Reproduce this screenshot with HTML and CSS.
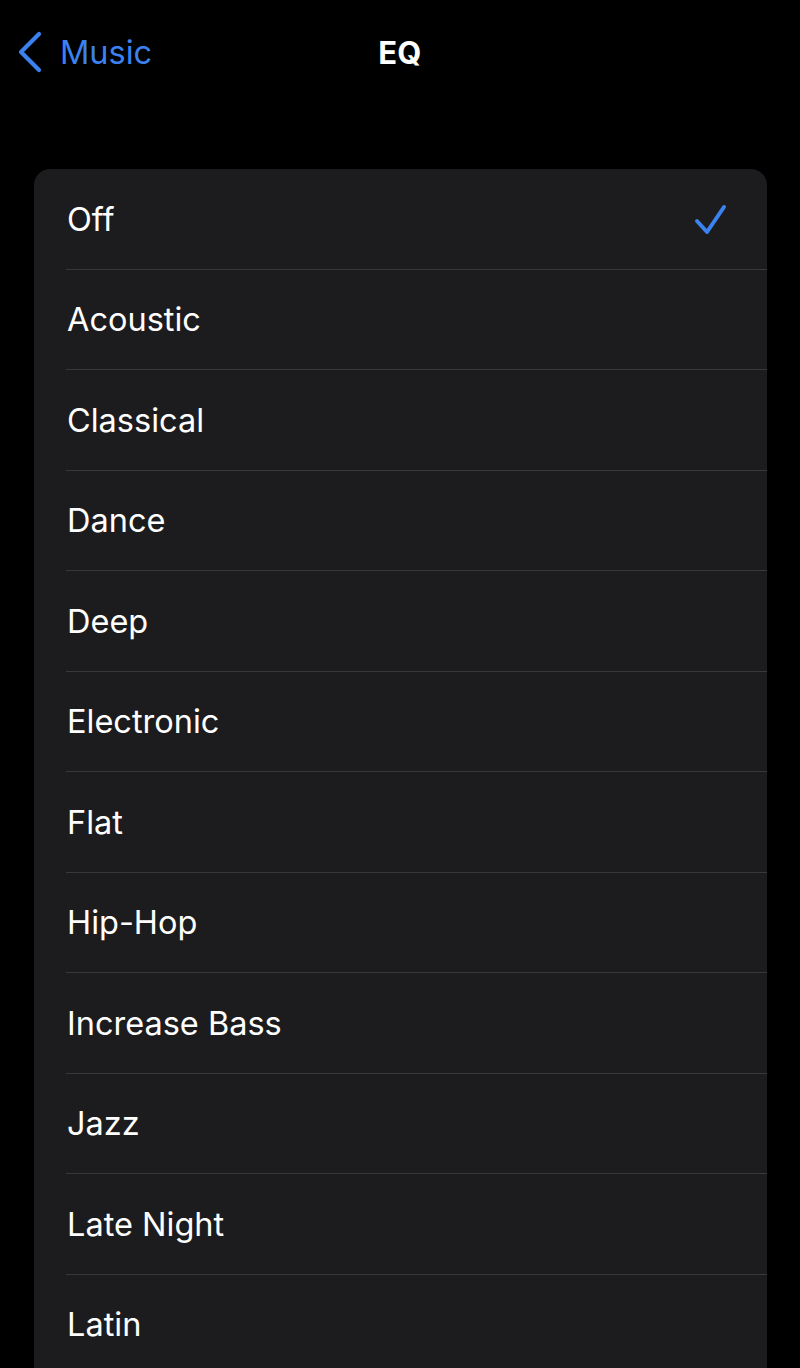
FILE: index.html
```html
<!DOCTYPE html>
<html lang="en">
<head>
  <meta charset="UTF-8">
  <meta name="viewport" content="width=device-width, initial-scale=1.0">
  <title>EQ</title>
  <link rel="stylesheet" href="styles.css">
</head>
<body>
  <header class="nav-bar">
    <a class="back-link" href="#">
      <svg class="back-chevron" width="26" height="42" viewBox="0 0 26 42">
        <path d="M22 3 L4 21 L22 39" fill="none" stroke="#3b82f0" stroke-width="4.2" stroke-linecap="round" stroke-linejoin="round"/>
      </svg>
      <span>Music</span>
    </a>
    <h1 class="nav-title">EQ</h1>
  </header>

  <ul class="eq-list">
    <li class="eq-row selected">
      <span>Off</span>
      <svg class="check" width="34" height="34" viewBox="0 0 34 34">
        <path d="M4 19 L14 30 L31 5" fill="none" stroke="#3b82f0" stroke-width="4" stroke-linecap="round" stroke-linejoin="round"/>
      </svg>
    </li>
    <li class="eq-row"><span>Acoustic</span></li>
    <li class="eq-row"><span>Classical</span></li>
    <li class="eq-row"><span>Dance</span></li>
    <li class="eq-row"><span>Deep</span></li>
    <li class="eq-row"><span>Electronic</span></li>
    <li class="eq-row"><span>Flat</span></li>
    <li class="eq-row"><span>Hip-Hop</span></li>
    <li class="eq-row"><span>Increase Bass</span></li>
    <li class="eq-row"><span>Jazz</span></li>
    <li class="eq-row"><span>Late Night</span></li>
    <li class="eq-row"><span>Latin</span></li>
  </ul>
</body>
</html>
```

FILE: styles.css
```css
body {
  margin: 0;
  background-color: #000;
  color: #fff;
  font-family: Inter, "Noto Sans", sans-serif;
  height: 1368px;
  overflow: hidden;
}

.nav-bar {
  position: relative;
  height: 104px;
  display: flex;
  align-items: center;
  justify-content: center;
}

.back-link {
  position: absolute;
  left: 17px;
  top: 31px;
  display: flex;
  align-items: center;
  gap: 17px;
  color: #3b82f0;
  text-decoration: none;
  font-size: 32.5px;
}

.back-chevron {
  display: block;
}

.nav-title {
  margin: 0;
  font-size: 31px;
  font-weight: 700;
  letter-spacing: 0.3px;
}

.eq-list {
  list-style: none;
  margin: 65px 33px 0 34px;
  padding: 0 0 60px;
  background-color: #1c1c1e;
  border-radius: 16px;
  overflow: hidden;
}

.eq-row {
  position: relative;
  height: 100.5px;
  display: flex;
  align-items: center;
  justify-content: space-between;
  padding: 0 40px 0 33px;
  font-size: 32.5px;
  box-sizing: border-box;
}

.eq-row::after {
  content: "";
  position: absolute;
  left: 32px;
  right: 0;
  bottom: 0;
  height: 1px;
  background-color: #38383a;
}

.check {
  display: block;
}
```
